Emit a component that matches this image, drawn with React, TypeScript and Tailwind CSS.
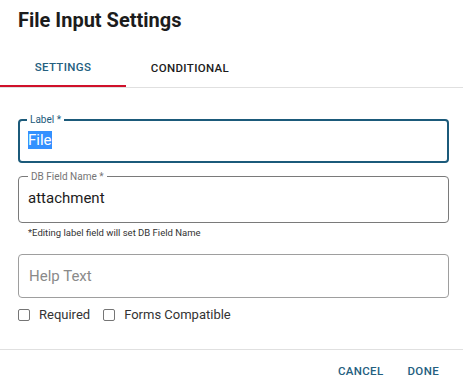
export default function App() {
  const font = { fontFamily: 'Roboto, "Liberation Sans", sans-serif' };

  return (
    <div className="w-[463px] h-[387px] bg-white text-[#212121] overflow-hidden" style={font}>
      {/* Header */}
      <h2 className="px-[18px] pt-[8px] text-[20px] leading-[24px] font-bold text-[#1c1c1c]">File Input Settings</h2>

      {/* Tabs */}
      <div className="mt-[18px] flex border-b border-[#e0e0e0]">
        <div className="w-[126px] h-[37px] flex items-center justify-center border-b-2 border-[#d0102a] -mb-px text-[11.5px] font-medium tracking-[0.35px] text-[#24607f]">
          SETTINGS
        </div>
        <div className="w-[128px] h-[37px] flex items-center justify-center text-[11.5px] font-medium tracking-[0.35px] text-[#1c1c1c]">
          CONDITIONAL
        </div>
      </div>

      {/* Form */}
      <div className="pl-[18px] pr-[14px] pt-[25px]">
        <fieldset className="h-[50px] border-2 border-[#1b5a7a] rounded-[4px] px-[8px] pb-[4px]">
          <legend className="ml-[-1px] px-[3px] text-[10px] leading-[13px] text-[#1b5a7a]">Label *</legend>
          <div className="mt-[4px] text-[15px] leading-[20px]">
            <span className="bg-[#3390ff] text-white">File</span>
          </div>
        </fieldset>

        <fieldset className="mt-[7px] h-[53px] border border-[#7a7a7a] rounded-[4px] px-[9px] pb-[4px]">
          <legend className="px-[3px] text-[10px] leading-[13px] text-[#757575]">DB Field Name *</legend>
          <div className="mt-[5px] text-[15px] leading-[20px] text-[#1c1c1c]">attachment</div>
        </fieldset>
        <div className="mt-[4px] pl-[10px] text-[9.5px] leading-[12px] text-[#333]">*Editing label field will set DB Field Name</div>

        <div className="mt-[15px] h-[44px] border border-[#9e9e9e] rounded-[4px] px-[10px] flex items-center text-[15px] text-[#8a8a8a]">
          Help Text
        </div>

        <div className="mt-[7px] flex items-center text-[13px] text-[#333]">
          <span className="w-[12px] h-[12px] border-[1.5px] border-[#757575] rounded-[2px]"></span>
          <span className="ml-[9px]">Required</span>
          <span className="ml-[13px] w-[12px] h-[12px] border-[1.5px] border-[#757575] rounded-[2px]"></span>
          <span className="ml-[9px]">Forms Compatible</span>
        </div>
      </div>

      {/* Footer */}
      <div className="mt-[24px] border-t border-[#e0e0e0] flex justify-end items-center h-[46px] pr-[24px] gap-[24px] text-[11.5px] font-medium tracking-[0.35px] text-[#24607f]">
        <span>CANCEL</span>
        <span>DONE</span>
      </div>
    </div>
  );
}
